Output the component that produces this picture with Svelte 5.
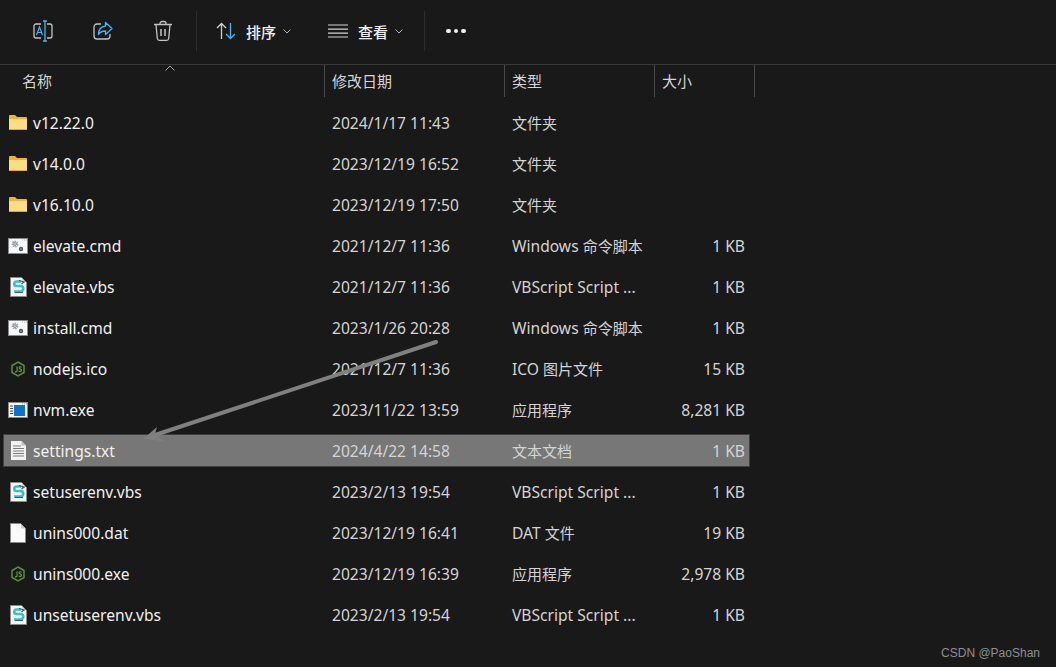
<script lang="ts">
	type Row = { name: string; date: string; type: string; size: string; icon: string; selected?: boolean };

	const rows: Row[] = [
		{ name: 'v12.22.0', date: '2024/1/17 11:43', type: '文件夹', size: '', icon: 'folder' },
		{ name: 'v14.0.0', date: '2023/12/19 16:52', type: '文件夹', size: '', icon: 'folder' },
		{ name: 'v16.10.0', date: '2023/12/19 17:50', type: '文件夹', size: '', icon: 'folder' },
		{ name: 'elevate.cmd', date: '2021/12/7 11:36', type: 'Windows 命令脚本', size: '1 KB', icon: 'cmd' },
		{ name: 'elevate.vbs', date: '2021/12/7 11:36', type: 'VBScript Script ...', size: '1 KB', icon: 'vbs' },
		{ name: 'install.cmd', date: '2023/1/26 20:28', type: 'Windows 命令脚本', size: '1 KB', icon: 'cmd' },
		{ name: 'nodejs.ico', date: '2021/12/7 11:36', type: 'ICO 图片文件', size: '15 KB', icon: 'node' },
		{ name: 'nvm.exe', date: '2023/11/22 13:59', type: '应用程序', size: '8,281 KB', icon: 'exe' },
		{ name: 'settings.txt', date: '2024/4/22 14:58', type: '文本文档', size: '1 KB', icon: 'txt', selected: true },
		{ name: 'setuserenv.vbs', date: '2023/2/13 19:54', type: 'VBScript Script ...', size: '1 KB', icon: 'vbs' },
		{ name: 'unins000.dat', date: '2023/12/19 16:41', type: 'DAT 文件', size: '19 KB', icon: 'dat' },
		{ name: 'unins000.exe', date: '2023/12/19 16:39', type: '应用程序', size: '2,978 KB', icon: 'node' },
		{ name: 'unsetuserenv.vbs', date: '2023/2/13 19:54', type: 'VBScript Script ...', size: '1 KB', icon: 'vbs' }
	];

	// CJK runs sit a little smaller than the latin text, odd indexes are the CJK parts
	const parts = (text: string) => text.split(/([\u4e00-\u9fff]+)/);
</script>

<div class="window">
	<div class="toolbar">
		<button class="tool" aria-label="重命名">
			<svg width="22" height="22" viewBox="0 0 22 22" fill="none">
				<path d="M9 4H4a2 2 0 0 0-2 2v10a2 2 0 0 0 2 2h5M15 4h3a2 2 0 0 1 2 2v10a2 2 0 0 1-2 2h-3" stroke="#c4c4c4" stroke-width="1.3" />
				<path d="M13 1v20M11 1h4M11 21h4" stroke="#4cb4ee" stroke-width="1.3" />
				<path d="M4.500 15l3-8 3 8M5.500 12.500h4" stroke="#4cb4ee" stroke-width="1.2" />
			</svg>
		</button>
		<button class="tool" aria-label="共享">
			<svg width="22" height="22" viewBox="0 0 22 22" fill="none">
				<path d="M9 4H5a3 3 0 0 0-3 3v9a3 3 0 0 0 3 3h10a3 3 0 0 0 3-3v-2" stroke="#c4c4c4" stroke-width="1.3" />
				<path d="M13.500 2.500L20 8.500l-6.500 6v-3.500c-3.500 0-5.500 1-7 3.500 0-5 2.500-8 7-8.500z" stroke="#4cb4ee" stroke-width="1.3" stroke-linejoin="round" />
			</svg>
		</button>
		<button class="tool" aria-label="删除">
			<svg width="22" height="22" viewBox="0 0 22 22" fill="none" stroke="#c4c4c4" stroke-width="1.3">
				<path d="M2 4.500h18M8 4.500V3.500a2 2 0 0 1 2-2h2a2 2 0 0 1 2 2v1M4 4.500l1.300 14a2 2 0 0 0 2 1.800h7.400a2 2 0 0 0 2-1.800l1.300-14" />
				<path d="M9 9v7M13 9v7" stroke-width="1.500" />
			</svg>
		</button>
		<span class="divider first"></span>
		<button class="menu sort">
			<svg width="20" height="18" viewBox="0 0 20 18" fill="none" stroke-width="1.300">
				<path d="M5.500 17V1.500M1 6l4.500-4.500L10 6" stroke="#d0d0d0" />
				<path d="M14.500 1v15.500M10 12l4.500 4.500L19 12" stroke="#4cb4ee" />
			</svg>
			<span>排序</span>
			<svg class="chev" width="8" height="5" viewBox="0 0 8 5" fill="none"><path d="M.5.500L4 4 7.500.500" stroke="#b5b5b5" /></svg>
		</button>
		<button class="menu view">
			<svg width="20" height="14" viewBox="0 0 20 14" fill="none" stroke="#d4d4d4" stroke-width="1.200">
				<path d="M0 1h20M0 5.200h20M0 9.200h20M0 13h20" />
			</svg>
			<span>查看</span>
			<svg class="chev" width="8" height="5" viewBox="0 0 8 5" fill="none"><path d="M.5.500L4 4 7.500.500" stroke="#b5b5b5" /></svg>
		</button>
		<span class="divider second"></span>
		<div class="dots"><i></i><i></i><i></i></div>
	</div>

	<div class="head">
		<svg class="sort-caret" width="10" height="6" viewBox="0 0 10 6" fill="none"><path d="M.5 5.500L5 1l4.500 4.500" stroke="#a8a8a8" /></svg>
		<div class="col name">名称</div>
		<div class="col date">修改日期</div>
		<div class="col type">类型</div>
		<div class="col size">大小</div>
	</div>

	<div class="list">
		{#each rows as row}
			<div class="row" class:selected={row.selected}>
				<div class="cell name">
					<span class="icon">
						{#if row.icon === 'folder'}
							<svg width="18" height="15" viewBox="0 0 18 15">
								<path d="M0 1a1 1 0 0 1 1-1h5l2 2h9a1 1 0 0 1 1 1v2H0z" fill="#f2b233" />
								<path d="M0 4h18v10a1 1 0 0 1-1 1H1a1 1 0 0 1-1-1z" fill="#fcdc84" />
								<path d="M0 14h18v.300a.700.700 0 0 1-.700.700H.700a.700.700 0 0 1-.700-.700z" fill="#e5a82c" />
							</svg>
						{:else if row.icon === 'cmd'}
							<svg width="20" height="16" viewBox="0 0 20 16">
								<rect x=".5" y=".5" width="19" height="15" fill="#f7f7f7" stroke="#8a8a8a" />
								<path d="M14 2h5" stroke="#b0b0b0" stroke-dasharray="1 1" />
								<circle cx="7" cy="6" r="2.200" fill="none" stroke="#98a2ad" stroke-width="2.400" stroke-dasharray="1.200 .6" />
								<circle cx="7" cy="6" r="1.300" fill="none" stroke="#8f98a3" />
								<circle cx="13" cy="11" r="1.400" fill="none" stroke="#4f5862" stroke-width="1.600" />
							</svg>
						{:else if row.icon === 'vbs'}
							<svg width="17" height="20" viewBox="0 0 17 20">
								<path d="M.5.500h11l5 5v14H.5z" fill="#f5f5f5" stroke="#8a8a8a" />
								<path d="M12 6V1l4 5z" fill="#d8d8d8" />
								<path d="M11 4.500H6.500a2 2 0 0 0 0 4.500h4a2.300 2.300 0 0 1 0 5.500H4" fill="none" stroke="#39c1c4" stroke-width="2.600" />
								<path d="M9 3.500l5 1.500-2.500 2M5 15.500h8" fill="none" stroke="#3f5560" stroke-width="1.200" />
							</svg>
						{:else if row.icon === 'node'}
							<svg width="14" height="16" viewBox="0 0 14 16" fill="none">
								<path d="M7 1l6 3.500v7L7 15l-6-3.500v-7z" stroke="#5b8f3c" stroke-width="1.500" />
								<path d="M6 5.500V10a1.200 1.200 0 0 1-2 .500M10.500 6.500c-.800-1-2.500-1-2.500.300S10.500 8 10.500 9.300 8.300 10.800 7.700 9.700" stroke="#6a9f48" stroke-width="1.100" />
							</svg>
						{:else if row.icon === 'exe'}
							<svg width="20" height="16" viewBox="0 0 20 16">
								<rect x=".5" y=".5" width="19" height="15" fill="#f7f7f7" stroke="#8a8a8a" />
								<rect x="6" y="3" width="11" height="11" fill="#0f72c9" />
								<path d="M2 4h3M2 6.500h3M2 9h3M2 11.500h3" stroke="#444" />
								<path d="M14 1.800h5" stroke="#999" stroke-dasharray="1 1" />
							</svg>
						{:else if row.icon === 'txt'}
							<svg width="15" height="19" viewBox="0 0 15 19">
								<path d="M0 0h10.500L15 4.500V19H0z" fill="#f3f3f3" />
								<path d="M10.500 0v4.500H15z" fill="#bdbdbd" />
								<path d="M2 5h8M2 7.500h11M2 10h11M2 12.500h11M2 15h11" stroke="#7a7a7a" />
							</svg>
						{:else}
							<svg width="16" height="20" viewBox="0 0 16 20">
								<path d="M.5.500h10l5 5v14H.5z" fill="#fafafa" stroke="#8a8a8a" />
								<path d="M11 1v4.500h4.500z" fill="#c9c9c9" />
							</svg>
						{/if}
					</span>
					<span class="label">{row.name}</span>
				</div>
				<div class="cell date">{row.date}</div>
				<div class="cell type">
					{#each parts(row.type) as part, i}
						{#if i % 2}<span class="cjk">{part}</span>{:else}{part}{/if}
					{/each}
				</div>
				<div class="cell size">{row.size}</div>
			</div>
		{/each}
	</div>

	<!-- arrow drawn over the list -->
	<svg class="arrow" width="1056" height="667" viewBox="0 0 1056 667" fill="none">
		<path d="M436 342L155 435" stroke="#808080" stroke-width="4" stroke-linecap="round" />
		<path d="M143 439l14-12-2 7 8 7z" fill="#808080" />
	</svg>

	<div class="watermark">CSDN @PaoShan</div>
</div>

<style>
	:global(body) {
		margin: 0;
		background: #191919;
	}

	.window {
		position: relative;
		width: 1056px;
		height: 667px;
		overflow: hidden;
		background: #191919;
		color: #e8e8e8;
		font-family: 'Noto Sans', 'Noto Sans CJK SC', sans-serif;
		font-size: 15.6px;
	}

	button {
		background: none;
		border: none;
		padding: 0;
		color: inherit;
		font: inherit;
		display: flex;
		align-items: center;
	}

	/* Toolbar */
	.toolbar {
		height: 65px;
		box-sizing: border-box;
		padding: 0 0 2px 13px;
		display: flex;
		align-items: center;
		border-bottom: 1px solid #3a3a3a;
	}

	.tool {
		width: 60px;
		height: 40px;
		justify-content: center;
	}

	.divider {
		width: 1px;
		height: 40px;
		background: #2e2e2e;
	}

	.divider.first {
		margin-left: 3px;
	}

	.menu {
		gap: 10px;
		font-size: 15px;
		font-weight: 500;
		color: #f2f2f2;
	}

	.menu .chev {
		margin-left: -3px;
	}

	.menu.sort {
		margin-left: 19px;
	}

	.menu.view {
		margin-left: 37px;
	}

	.divider.second {
		margin-left: 21px;
	}

	.dots {
		margin-left: 21px;
		display: flex;
		gap: 3px;
	}

	.dots i {
		width: 4.500px;
		height: 4.500px;
		border-radius: 50%;
		background: #f0f0f0;
	}

	/* Column header */
	.head {
		position: relative;
		display: flex;
		height: 32px;
		font-size: 15px;
		color: #d6d6d6;
	}

	.sort-caret {
		position: absolute;
		left: 165px;
		top: 0;
	}

	.col {
		box-sizing: border-box;
		padding-left: 7px;
		line-height: 32px;
		border-right: 1px solid #4a4a4a;
	}

	.col.name {
		width: 325px;
		padding-left: 22px;
	}

	.col.date {
		width: 180px;
	}

	.col.type {
		width: 150px;
	}

	.col.size {
		width: 100px;
	}

	/* File rows */
	.list {
		padding: 5px 0 0 3px;
		width: 747px;
		display: flex;
		flex-direction: column;
	}

	.row {
		display: flex;
		height: 41px;
		align-items: center;
		position: relative;
		z-index: 0;
	}

	.row.selected::before {
		content: '';
		position: absolute;
		z-index: -1;
		inset: 4px 0 4px 0;
		background: #777777;
		border: 1px solid #3f3f3f;
	}

	.cell {
		box-sizing: border-box;
		white-space: nowrap;
		color: #d4d4d4;
	}

	.cell.name {
		width: 322px;
		display: flex;
		align-items: center;
		color: #f0f0f0;
	}

	.icon {
		width: 30px;
		height: 22px;
		display: flex;
		align-items: center;
		justify-content: center;
		flex: none;
	}

	.cell.date {
		width: 180px;
		padding-left: 7px;
	}

	.cell.type {
		width: 150px;
		padding-left: 7px;
	}

	.cjk {
		font-size: 15px;
	}

	.cell.size {
		width: 90px;
		text-align: right;
	}

	.arrow {
		position: absolute;
		left: 0;
		top: 0;
		pointer-events: none;
	}

	.watermark {
		position: absolute;
		right: 16px;
		bottom: 7px;
		font-family: 'Liberation Sans', sans-serif;
		font-size: 12px;
		color: #8f8f8f;
	}
</style>
